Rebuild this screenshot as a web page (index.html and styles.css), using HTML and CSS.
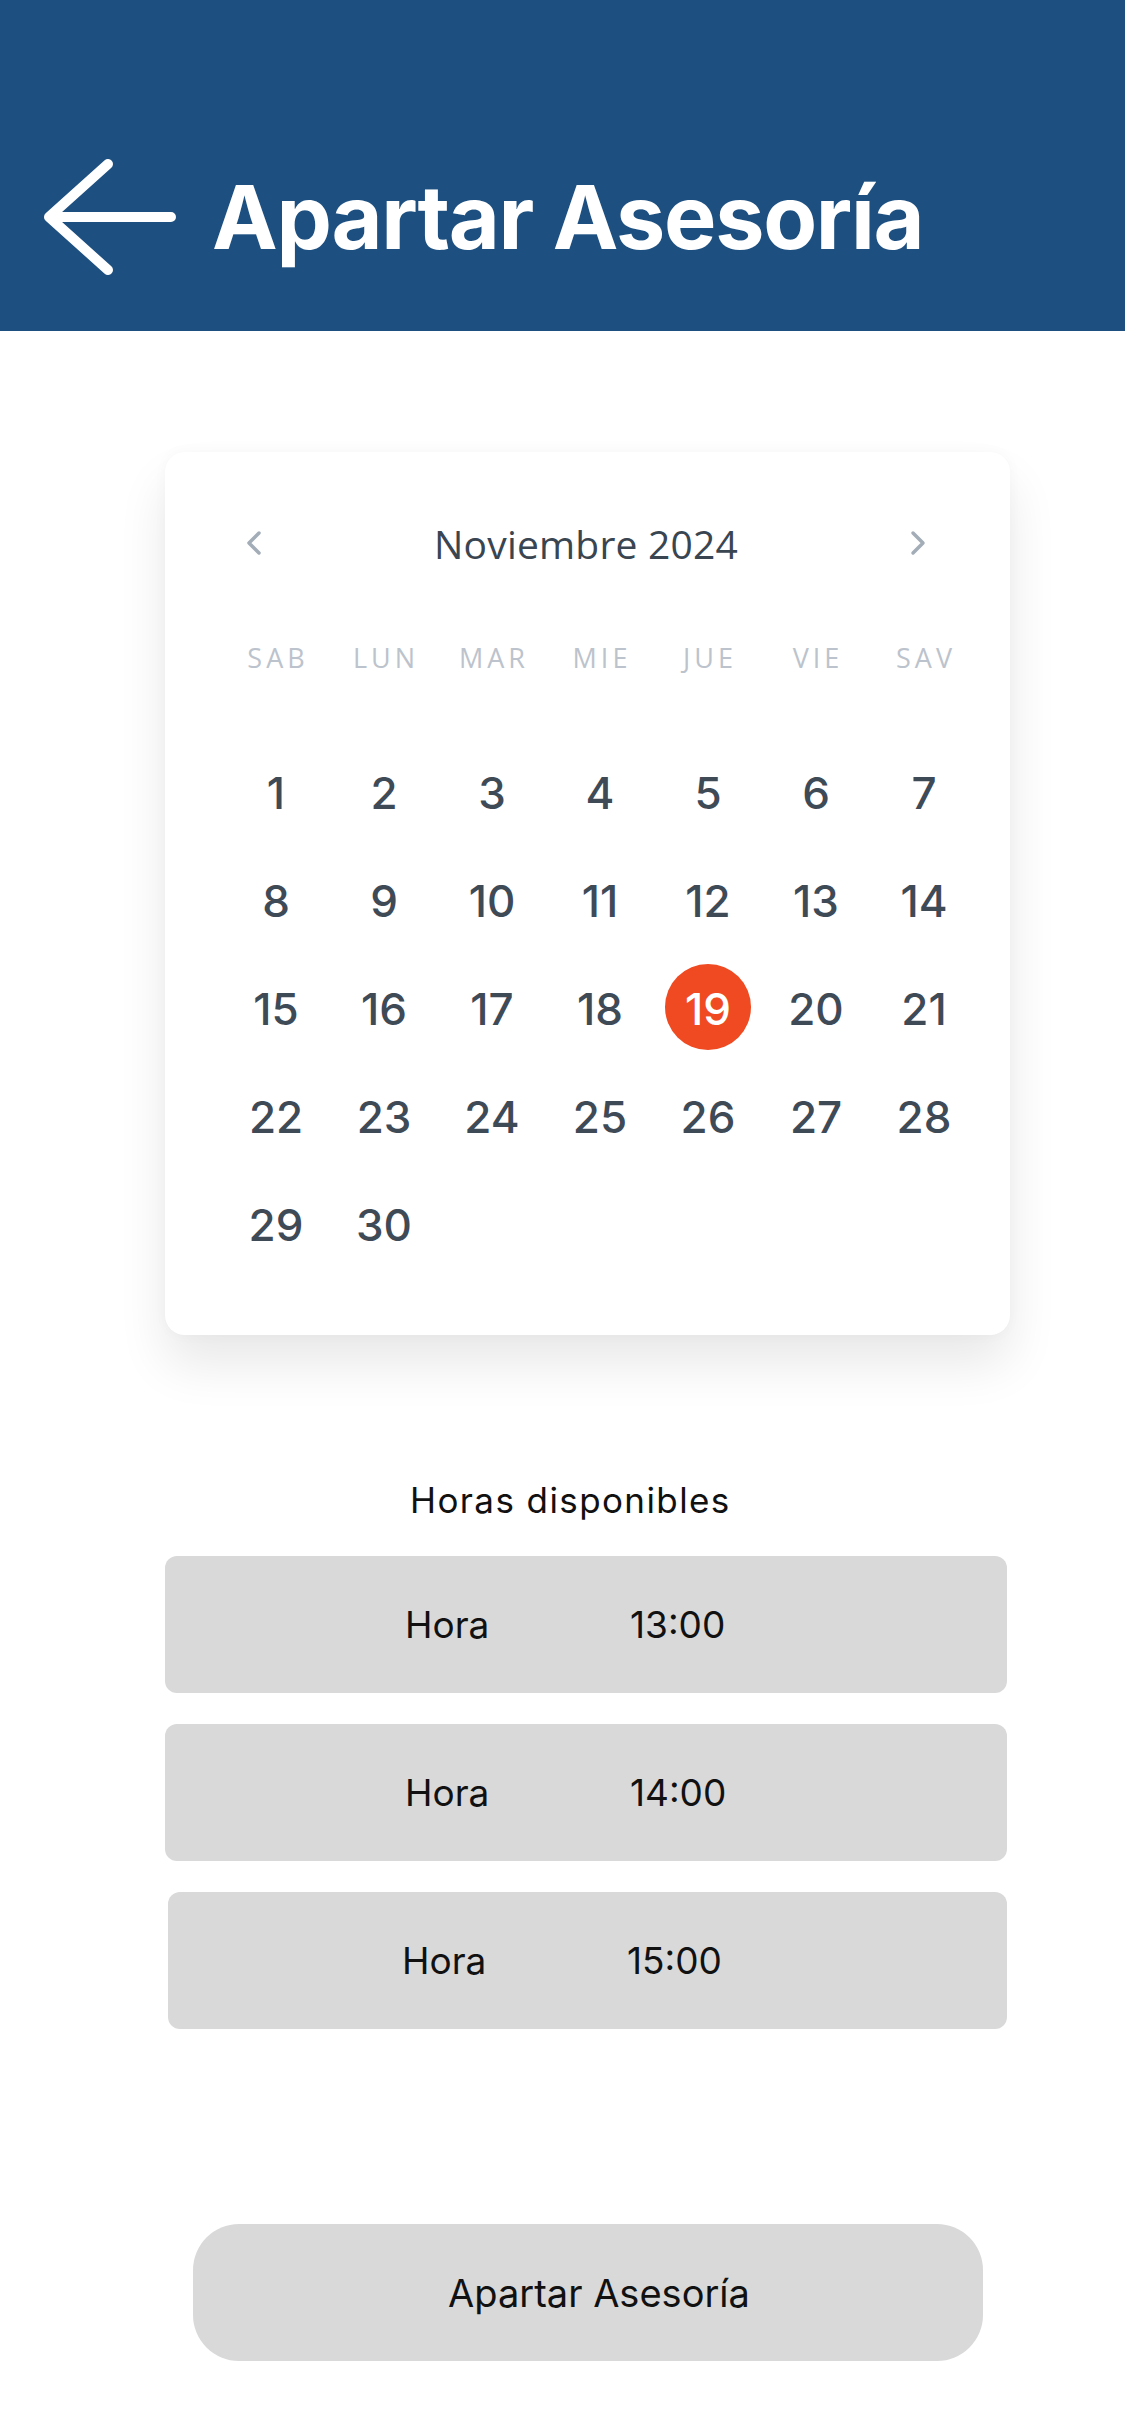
FILE: index.html
```html
<!DOCTYPE html>
<html lang="es">
<head>
<meta charset="utf-8">
<title>Apartar Asesoría</title>
<link rel="stylesheet" href="styles.css">
</head>
<body>
<header class="topbar">
  <svg class="back" width="132" height="116" viewBox="0 0 132 116" aria-hidden="true">
    <path d="M127 58 H6 M64 5 L5 58 L64 111" fill="none" stroke="#fff" stroke-width="10" stroke-linecap="round" stroke-linejoin="round"/>
  </svg>
  <h1 class="title">Apartar Asesoría</h1>
</header>

<main class="content">
  <section class="calendar">
    <div class="cal-nav">
      <svg class="chev" width="17" height="26" viewBox="0 0 17 26" aria-hidden="true"><path d="M14 3 L4 13 L14 23" fill="none" stroke="#a3adb8" stroke-width="3.5" stroke-linecap="round" stroke-linejoin="round"/></svg>
      <span class="month">Noviembre 2024</span>
      <svg class="chev" width="17" height="26" viewBox="0 0 17 26" aria-hidden="true"><path d="M3 3 L13 13 L3 23" fill="none" stroke="#a3adb8" stroke-width="3.5" stroke-linecap="round" stroke-linejoin="round"/></svg>
    </div>
    <div class="weekdays">
      <span>SAB</span><span>LUN</span><span>MAR</span><span>MIE</span><span>JUE</span><span>VIE</span><span>SAV</span>
    </div>
    <div class="days">
      <span>1</span><span>2</span><span>3</span><span>4</span><span>5</span><span>6</span><span>7</span>
      <span>8</span><span>9</span><span>10</span><span>11</span><span>12</span><span>13</span><span>14</span>
      <span>15</span><span>16</span><span>17</span><span>18</span><span class="selected"><b>19</b></span><span>20</span><span>21</span>
      <span>22</span><span>23</span><span>24</span><span>25</span><span>26</span><span>27</span><span>28</span>
      <span>29</span><span>30</span>
    </div>
  </section>

  <h2 class="hours-title">Horas disponibles</h2>
  <div class="slots">
    <div class="slot"><span class="slot-label">Hora</span><span class="slot-time">13:00</span></div>
    <div class="slot"><span class="slot-label">Hora</span><span class="slot-time">14:00</span></div>
    <div class="slot slot-shifted"><span class="slot-label">Hora</span><span class="slot-time">15:00</span></div>
  </div>

  <button class="book">Apartar Asesoría</button>
</main>
</body>
</html>
```

FILE: styles.css
```css
* { box-sizing: border-box; }

html, body {
  margin: 0;
  padding: 0;
  background: #ffffff;
}

body {
  width: 1125px;
  font-family: Inter, "Liberation Sans", sans-serif;
  color: #111111;
}

.topbar {
  height: 331px;
  background: #1d5080;
  display: flex;
  align-items: center;
  padding: 103px 0 0 44px;
}

.back {
  flex: none;
  display: block;
}

.title {
  margin: 0 0 0 36px;
  color: #ffffff;
  font-family: Inter, "Liberation Sans", sans-serif;
  font-weight: 700;
  font-size: 88px;
  line-height: 1;
  letter-spacing: -1.3px;
}

.content {
  display: flex;
  flex-direction: column;
  padding: 121px 0 0 165px;
}

.calendar {
  width: 845px;
  background: #ffffff;
  border-radius: 20px;
  box-shadow: 0 30px 50px rgba(0, 0, 0, 0.09), 0 0 14px rgba(0, 0, 0, 0.03);
  padding: 61px 0 58px 0;
}

.cal-nav {
  height: 60px;
  display: flex;
  align-items: center;
  justify-content: space-between;
  padding: 0 83px 0 80px;
}

.chev { display: block; }

.month {
  font-family: "Open Sans", sans-serif;
  font-size: 39px;
  color: #3a4552;
  letter-spacing: 0.2px;
}

.weekdays,
.days {
  display: grid;
  grid-template-columns: repeat(7, 108px);
  padding-left: 57px;
}

.weekdays {
  margin-top: 64px;
  height: 40px;
  align-items: center;
}

.weekdays span {
  text-align: center;
  font-family: "Open Sans", sans-serif;
  font-size: 27px;
  font-weight: 400;
  letter-spacing: 4px;
  padding-left: 4px;
  color: #bcc3cc;
}

.days {
  margin-top: 60px;
  grid-auto-rows: 108px;
}

.days span {
  display: flex;
  align-items: center;
  justify-content: center;
  padding-top: 3px;
  font-family: Inter, "Open Sans", sans-serif;
  font-weight: 500;
  font-size: 44px;
  color: #3f4a57;
}

.days .selected {
  padding-top: 0;
}

.days .selected b {
  width: 86px;
  height: 86px;
  border-radius: 50%;
  background: #ef4a21;
  color: #ffffff;
  font-weight: 500;
  display: flex;
  align-items: center;
  justify-content: center;
  padding-top: 3px;
}

.hours-title {
  margin: 145px 0 0 0;
  padding-left: 245px;
  font-weight: 400;
  font-size: 35px;
  line-height: 40px;
  letter-spacing: 1.4px;
  color: #111111;
}

.slots {
  margin-top: 36px;
  display: flex;
  flex-direction: column;
  gap: 31px;
  width: 842px;
}

.slot {
  height: 137px;
  background: #d9d9d9;
  border-radius: 12px;
  display: flex;
  align-items: center;
  padding-left: 240px;
  font-size: 37px;
}

.slot-shifted {
  margin-left: 3px;
  padding-left: 234px;
}

.slot-label {
  width: 225px;
}

.book {
  margin: 195px 0 0 28px;
  width: 790px;
  height: 137px;
  border: none;
  border-radius: 46px;
  background: #d9d9d9;
  font-family: Inter, "Liberation Sans", sans-serif;
  font-size: 38px;
  color: #111111;
  padding: 0 0 0 22px;
}
```
